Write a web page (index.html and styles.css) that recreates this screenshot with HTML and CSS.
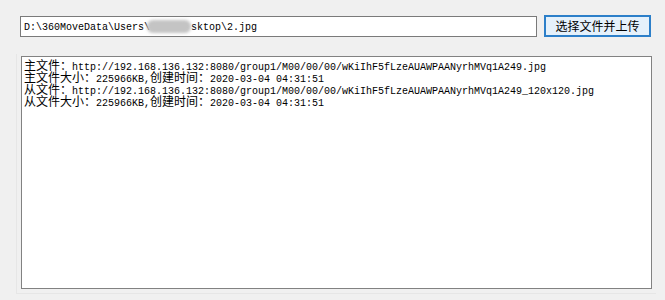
FILE: index.html
```html
<!DOCTYPE html>
<html lang="en">
<head>
    <meta charset="UTF-8">
    <title>FastDFS Upload</title>
    <link rel="stylesheet" href="styles.css">
</head>
<body>
    <div class="toolbar">
        <div class="path-box">D:\360MoveData\Users\<span class="blurred"></span>sktop\2.jpg</div>
        <button class="upload-btn">选择文件并上传</button>
    </div>

    <div class="frame">
        <div class="log">
            <div class="line"><span class="cn">主文件：</span>http://192.168.136.132:8080/group1/M00/00/00/wKiIhF5fLzeAUAWPAANyrhMVq1A249.jpg</div>
            <div class="line"><span class="cn">主文件大小：</span>225966KB,<span class="cn">创建时间：</span>2020-03-04 04:31:51</div>
            <div class="line"><span class="cn">从文件：</span>http://192.168.136.132:8080/group1/M00/00/00/wKiIhF5fLzeAUAWPAANyrhMVq1A249_120x120.jpg</div>
            <div class="line"><span class="cn">从文件大小：</span>225966KB,<span class="cn">创建时间：</span>2020-03-04 04:31:51</div>
        </div>
    </div>
</body>
</html>
```

FILE: styles.css
```css
body { margin: 0; background: #f0f0f0; font-family: "Liberation Mono", monospace; font-size: 10px; color: #000; }
.toolbar { display: flex; align-items: flex-start; padding: 15px 0 0 20px; }
.path-box { box-sizing: border-box; width: 517px; height: 21px; margin-top: 1px; padding: 3px 3px; background: #fff; border: 1px solid #7a7a7a; line-height: 14px; white-space: nowrap; }
.blurred { display: inline-block; width: 44px; height: 13px; margin-left: -3px; vertical-align: -3px; background: #c4c4c4; border-radius: 6px; filter: blur(1.5px); }
.upload-btn { box-sizing: border-box; width: 107px; height: 22px; margin-left: 7px; padding: 0; background: #e5f1fb; border: 2px solid #2c7fc9; font-family: "Noto Sans CJK SC", sans-serif; font-size: 12px; line-height: 16px; color: #000; }
.frame { margin: 17px 0 0 16px; width: 640px; padding: 2px 4px 4px 4px; box-sizing: border-box; border-left: 1px solid #e6e6e6; border-bottom: 1px solid #e6e6e6; }
.log { box-sizing: border-box; height: 233px; padding: 2px 2px; background: #fff; border: 1px solid #828282; }
.line { height: 12px; line-height: 12px; white-space: nowrap; }
.cn { font-family: "Noto Sans CJK SC", sans-serif; font-size: 12px; line-height: 12px; }
```
